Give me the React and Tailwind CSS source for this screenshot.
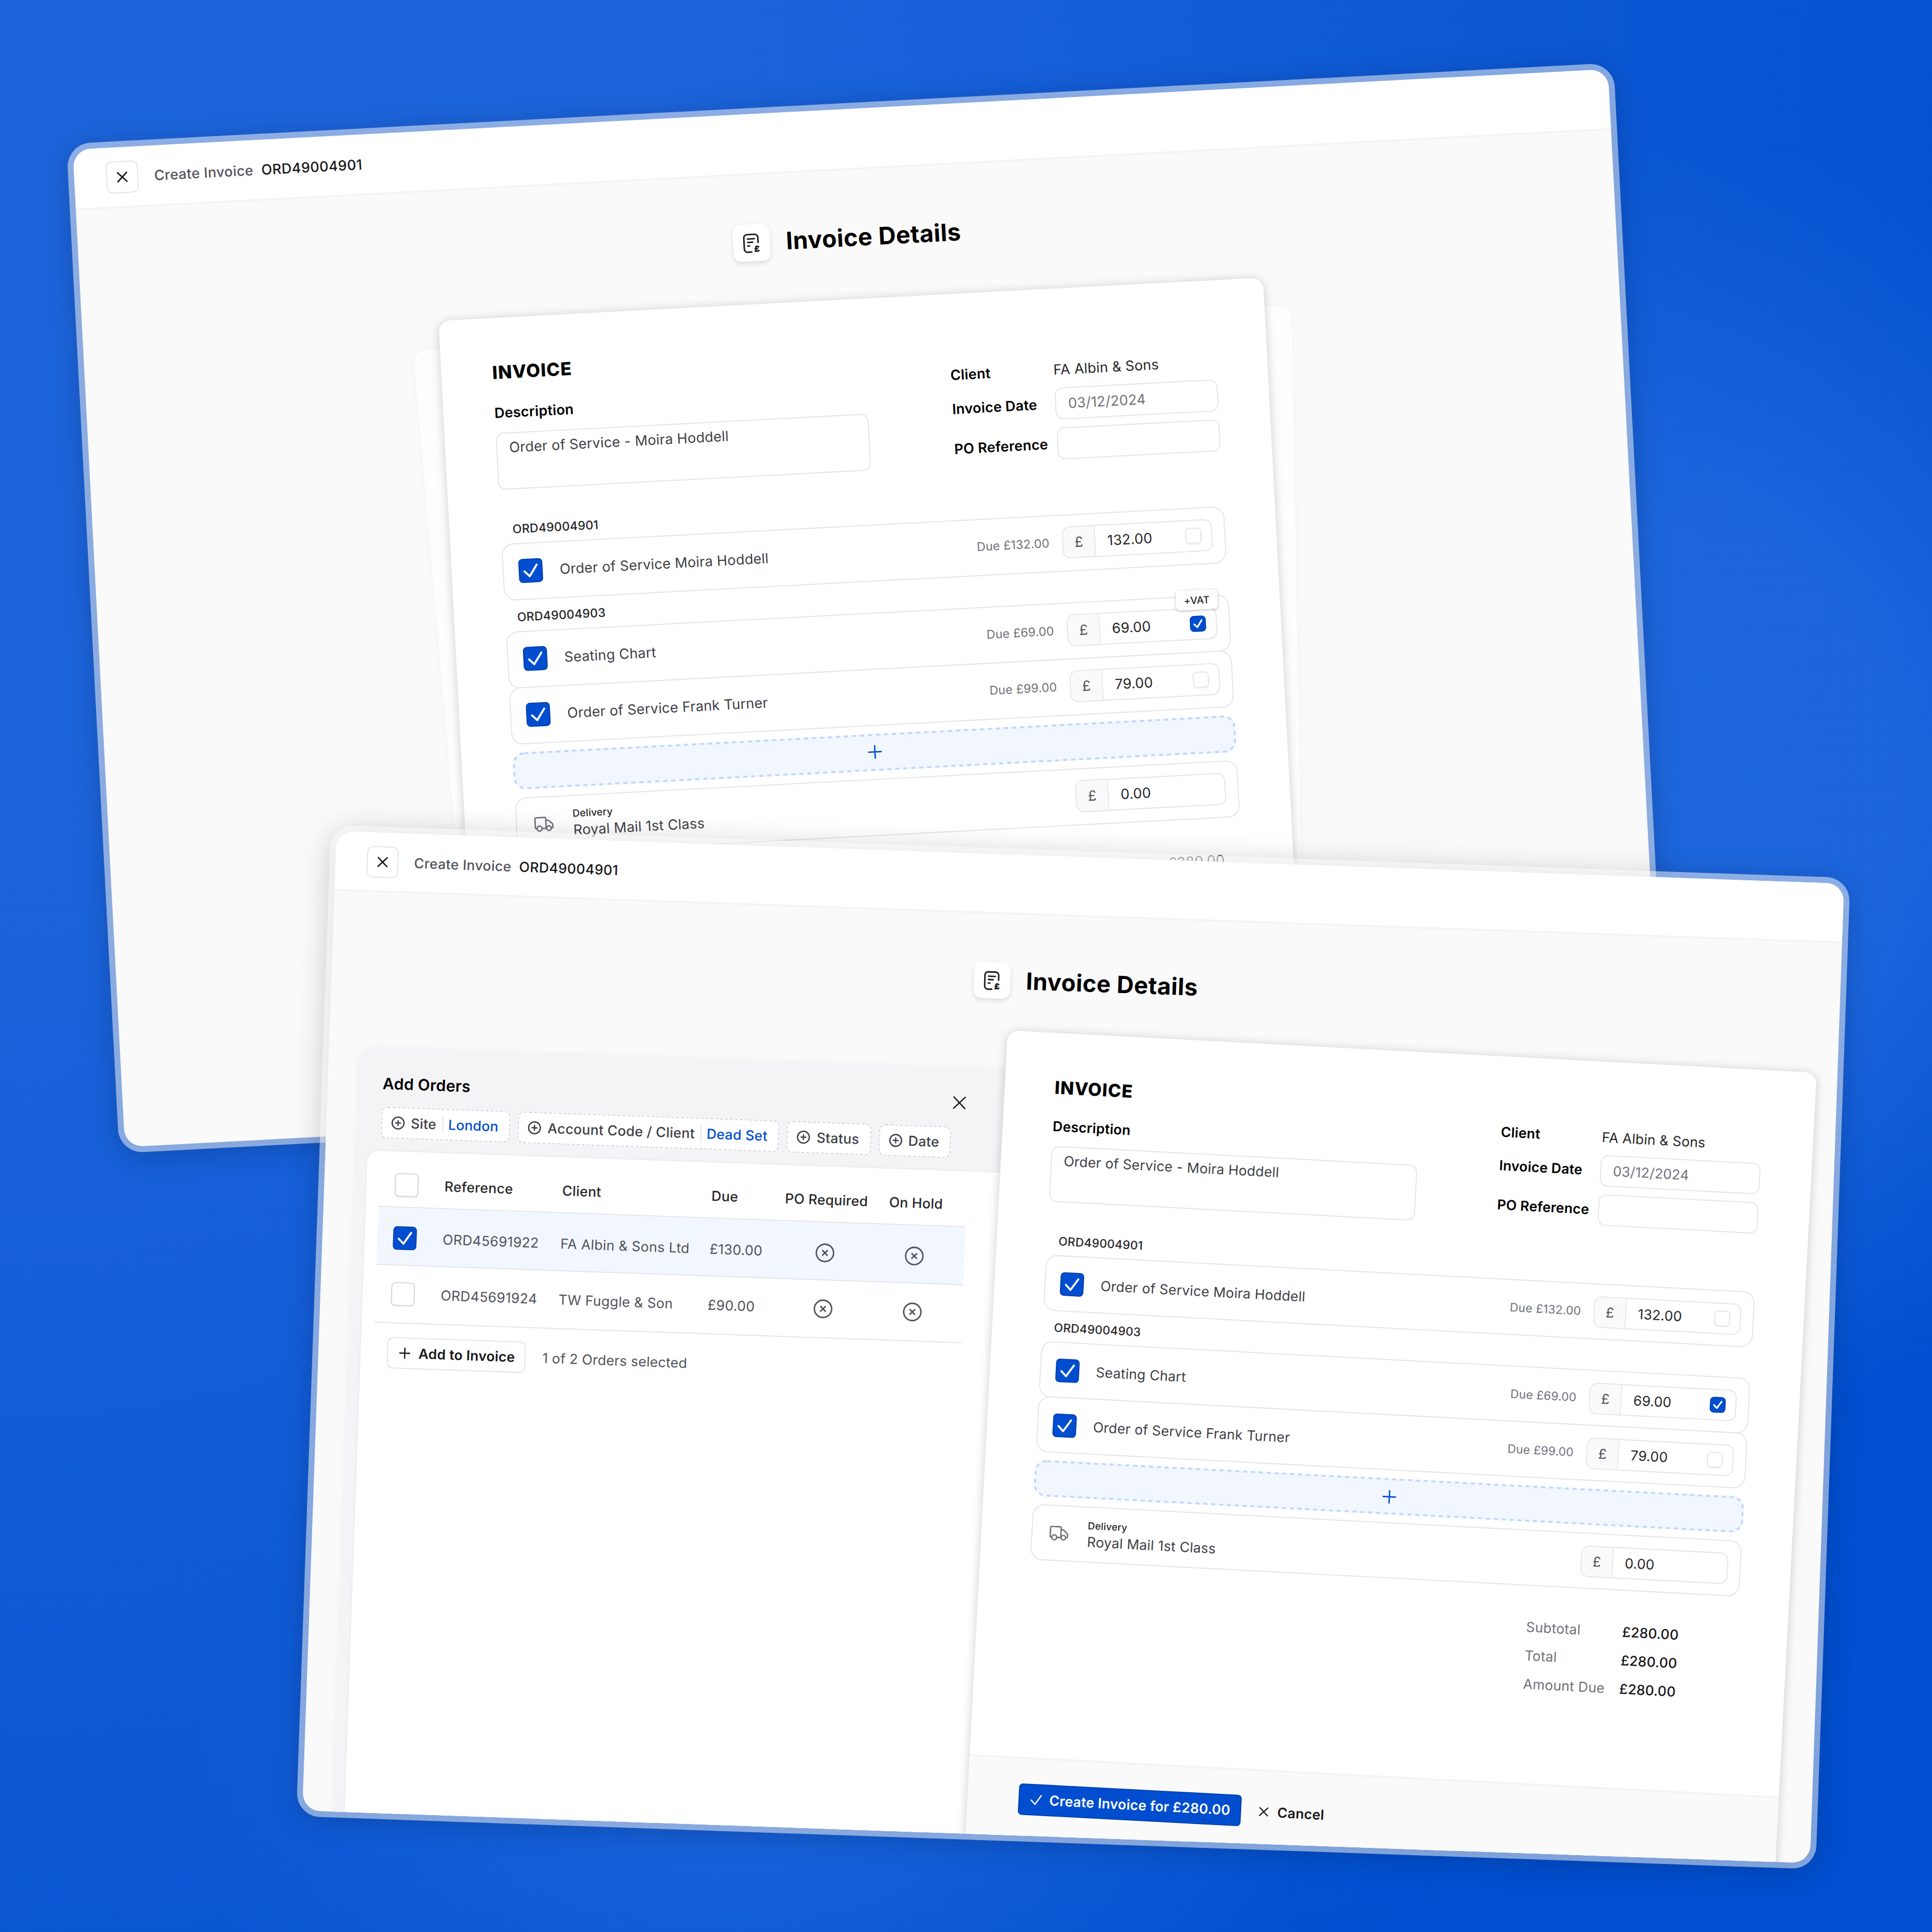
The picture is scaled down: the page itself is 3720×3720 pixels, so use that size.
import React from 'react';

const orders = [
  { ref: 'ORD45691922', client: 'FA Albin & Sons Ltd', due: '£130.00', selected: true },
  { ref: 'ORD45691924', client: 'TW Fuggle & Son', due: '£90.00', selected: false },
];

function Icon({ children, className, strokeWidth = 1.5 }) {
  return (
    <svg
      viewBox="0 0 24 24"
      fill="none"
      stroke="currentColor"
      strokeWidth={strokeWidth}
      strokeLinecap="round"
      strokeLinejoin="round"
      className={`shrink-0 ${className}`}
    >
      {children}
    </svg>
  );
}

function XMark({ className, strokeWidth }) {
  return (
    <Icon className={className} strokeWidth={strokeWidth}>
      <path d="M6 18 18 6M6 6l12 12" />
    </Icon>
  );
}

function Check({ className, strokeWidth }) {
  return (
    <Icon className={className} strokeWidth={strokeWidth}>
      <path d="m4.5 12.75 6 6 9-13.5" />
    </Icon>
  );
}

function Plus({ className, strokeWidth }) {
  return (
    <Icon className={className} strokeWidth={strokeWidth}>
      <path d="M12 4.5v15m7.5-7.5h-15" />
    </Icon>
  );
}

function InvoiceIcon() {
  return (
    <Icon className="size-6 text-zinc-900">
      <path d="M12.3 20.8H8.2A3.2 3.2 0 0 1 5 17.6V6.4a3.2 3.2 0 0 1 3.2-3.2h7.6A3.2 3.2 0 0 1 19 6.4v5.1" />
      <path d="M8.6 7.6h7M8.6 11h5M8.6 14.6h1.8" />
      <text
        x="15"
        y="20.6"
        fontSize="8"
        fontWeight="800"
        fill="currentColor"
        stroke="currentColor"
        strokeWidth="0.4"
        className="font-['Inter',sans-serif]"
      >
        £
      </text>
    </Icon>
  );
}

function TruckIcon() {
  return (
    <Icon className="size-6 text-zinc-500" strokeWidth={1.4}>
      <path d="M4.9 16h-.7a1 1 0 0 1-1-1V6.100a1 1 0 0 1 1-1H13a1 1 0 0 1 1 1V16H9.900" />
      <path d="M14 8h1.800a1.800 1.800 0 0 1 1.200.5l3.200 3c.4.400.6.800.6 1.300v2a1.100 1.100 0 0 1-1.100 1.100M14 16h.3" />
      <circle cx="7.400" cy="16" r="2.500" />
      <circle cx="16.700" cy="16" r="2.300" />
    </Icon>
  );
}

function Checkbox({ checked, small }) {
  if (small) {
    return checked ? (
      <span className="flex size-4 items-center justify-center rounded border border-[#003fae] bg-[#004ecf] text-white">
        <Check className="size-3" strokeWidth={3.4} />
      </span>
    ) : (
      <span className="block size-4 rounded border border-zinc-200 bg-white shadow-xs" />
    );
  }
  return checked ? (
    <span className="flex size-6 shrink-0 items-center justify-center rounded border border-[#003fae] bg-[#004ecf] text-white">
      <Check className="size-5" strokeWidth={2.4} />
    </span>
  ) : (
    <span className="block size-6 shrink-0 rounded border border-zinc-300 bg-white shadow-xs" />
  );
}

function Money({ value, vat, tooltip }) {
  return (
    <div className="relative flex h-8 w-[150px] items-center rounded-lg border border-zinc-200 bg-white">
      <span className="flex h-full w-8 items-center justify-center rounded-l-[7px] border-r border-zinc-200 bg-zinc-50 text-zinc-600">
        £
      </span>
      <span className="flex-1 pl-3 text-zinc-800">{value}</span>
      {vat !== undefined && (
        <span className="pr-2.5">
          <Checkbox small checked={vat} />
        </span>
      )}
      {tooltip && (
        <span className="absolute -top-[19px] -right-[3px] flex h-5 items-center rounded bg-white px-2 text-[10px] font-medium text-zinc-800 shadow-[0_0_1px_rgba(0,0,0,0.2),0_1px_3px_rgba(0,0,0,0.2)]">
          +VAT
        </span>
      )}
    </div>
  );
}

function LineItem({ name, due, value, vat, tooltip, className = '' }) {
  return (
    <div className={`flex h-[57px] items-center rounded-xl border border-zinc-200 bg-white pr-3 pl-[15px] ${className}`}>
      <Checkbox checked />
      <span className="ml-[17px] flex-1 text-zinc-700">{name}</span>
      <span className="mr-[13px] text-xs text-zinc-500">Due {due}</span>
      <Money value={value} vat={vat} tooltip={tooltip} />
    </div>
  );
}

function InvoiceCard({ tooltip, meta, totals, amount }) {
  return (
    <div className="w-[825px] rounded-xl bg-white text-sm tracking-[0.008em] shadow-[0_1px_10px_rgba(0,0,0,0.2)]">
      <div className="h-[738px] px-[51px] pt-[41.5px]">
        <div className="flex items-end justify-between">
          <div className="w-[373px]">
            <h2 className="text-lg leading-7 font-extrabold tracking-[0.035em] text-black">INVOICE</h2>
            <p className="mt-[15.5px] font-semibold text-black">Description</p>
            <div className="mt-2.5 h-[57px] rounded-lg border border-zinc-200 px-3 py-1 text-zinc-700">
              Order of Service - Moira Hoddell
            </div>
          </div>
          <div className={`grid grid-cols-[103px_163px] items-center gap-y-2 ${meta}`}>
            <span className="font-semibold text-black">Client</span>
            <span className="text-zinc-800">FA Albin &amp; Sons</span>
            <span className="font-semibold text-black">Invoice Date</span>
            <span className="flex h-8 items-center rounded-lg border border-zinc-200 px-3 text-zinc-500">03/12/2024</span>
            <span className="font-semibold text-black">PO Reference</span>
            <span className="h-8 rounded-lg border border-zinc-200" />
          </div>
        </div>

        <p className="mt-8 pl-3 text-xs font-medium text-zinc-800">ORD49004901</p>
        <LineItem className="mt-1.5" name="Order of Service Moira Hoddell" due="£132.00" value="132.00" vat={false} />
        <p className="mt-[9px] pl-3 text-xs font-medium text-zinc-800">ORD49004903</p>
        <LineItem className="mt-1.5" name="Seating Chart" due="£69.00" value="69.00" vat tooltip={tooltip} />
        <LineItem className="-mt-px" name="Order of Service Frank Turner" due="£99.00" value="79.00" vat={false} />

        <div className="relative mt-2 flex h-[37px] items-center justify-center rounded-xl bg-[#f2f7ff] text-[#004ecf]">
          <svg viewBox="0 0 723 37" fill="none" className="absolute inset-0 size-full">
            <rect x="1" y="1" width="721" height="35" rx="11" stroke="#bdd7ff" strokeWidth="2" strokeDasharray="4 4" />
          </svg>
          <Plus className="size-5" strokeWidth={1.7} />
        </div>

        <div className="mt-2 flex h-[57px] items-center rounded-xl border border-zinc-200 pr-3 pl-[15px]">
          <TruckIcon />
          <div className="ml-[17px] flex-1">
            <p className="w-fit text-[10px] leading-[14px] font-medium text-zinc-800">Delivery</p>
            <p className="w-fit text-zinc-700">Royal Mail 1st Class</p>
          </div>
          <Money value="0.00" />
        </div>

        <div className={`mt-8 flex justify-end ${totals}`}>
          <div className="grid grid-cols-[98px_58px] gap-y-[9px] text-zinc-500">
            <span>Subtotal</span>
            <span className={amount}>£280.00</span>
            <span>Total</span>
            <span className={amount}>£280.00</span>
            <span>Amount Due</span>
            <span className={amount}>£280.00</span>
          </div>
        </div>
      </div>

      <div className="flex h-28 items-start border-t-2 border-zinc-100 bg-zinc-50 px-[51.5px] pt-[25px] font-semibold">
        <div className="flex h-8 items-center gap-1.5 rounded border border-[#003fae] bg-[#004ecf] pr-2.5 pl-[9px] text-white">
          <Check className="size-4" strokeWidth={2} />
          Create Invoice for £280.00
        </div>
        <div className="ml-[15px] flex h-8 items-center gap-1.5 text-zinc-900">
          <XMark className="size-4" strokeWidth={1.8} />
          Cancel
        </div>
      </div>
    </div>
  );
}

function Window({ className, children }) {
  return (
    <div
      className={`absolute h-[998px] w-[1536px] origin-top-left overflow-hidden rounded-[18px] bg-zinc-50 shadow-[0_0_0_6px_rgba(255,255,255,0.5),0_4px_30px_5px_rgba(0,0,0,0.2)] ${className}`}
    >
      <header className="flex h-[61px] items-center gap-4 border-b-2 border-zinc-100 bg-white px-8 text-sm font-medium">
        <span className="flex size-8 items-center justify-center rounded-md border border-zinc-200 text-zinc-900">
          <XMark className="size-[18px]" strokeWidth={1.9} />
        </span>
        <span className="flex gap-2 tracking-[0.014em]">
          <span className="text-zinc-600">Create Invoice</span>
          <span className="text-zinc-900">ORD49004901</span>
        </span>
      </header>
      <div className="mt-[48.5px] flex h-[38px] items-center justify-center gap-4">
        <span className="flex size-[37px] items-center justify-center rounded-lg bg-white shadow-[0_2px_5px_rgba(0,0,0,0.12)]">
          <InvoiceIcon />
        </span>
        <h1 className="text-2xl font-bold tracking-[0.01em] text-black">Invoice Details</h1>
      </div>
      {children}
    </div>
  );
}

function Chip({ label, value }) {
  return (
    <span className="flex h-8 items-center rounded-md border border-dashed border-zinc-300 bg-white pr-[11px] pl-2 tracking-[0.011em] text-zinc-700">
      <Icon className="mr-[5px] size-4" strokeWidth={2}>
        <circle cx="12" cy="12" r="9" />
        <path d="M12 8.300v7.400M15.700 12H8.300" />
      </Icon>
      {label}
      {value && (
        <>
          <span className="mr-[5px] ml-1.5 h-4 w-px bg-zinc-200" />
          <span className="text-[#004ecf]">{value}</span>
        </>
      )}
    </span>
  );
}

function CircleX() {
  return (
    <Icon className="mx-auto size-6" strokeWidth={1.5}>
      <circle cx="12" cy="12" r="8.800" />
      <path d="m9.600 9.600 4.800 4.800m0-4.800-4.800 4.800" />
    </Icon>
  );
}

function AddOrders() {
  return (
    <aside className="mt-[71.5px] ml-[31px] flex h-[800px] w-[700px] flex-col rounded-tl-2xl bg-[#f4f4f6] pt-[23.5px] text-sm tracking-[0.008em] shadow-[0_0_6px_rgba(0,0,0,0.05)]">
      <div className="ml-[25px] flex w-[599px] items-center justify-between">
        <h2 className="text-base font-semibold text-black">Add Orders</h2>
        <XMark className="size-[23px] text-zinc-900" strokeWidth={1.4} />
      </div>
      <div className="mt-[12.5px] ml-[25px] flex gap-2 font-medium">
        <Chip label="Site" value="London" />
        <Chip label="Account Code / Client" value="Dead Set" />
        <Chip label="Status" />
        <Chip label="Date" />
      </div>
      <div className="mt-[12.5px] ml-3 flex-1 rounded-tl-xl bg-white pt-3 pl-[13px] shadow-[0_0_3px_rgba(0,0,0,0.08)]">
        <div className="w-[598px] tracking-[0.012em]">
          <div className="grid h-[45px] grid-cols-[66.5px_120px_152px_75px_106px_78.5px] items-center border-b border-zinc-200 pt-px font-medium text-zinc-800">
            <span className="flex pl-4">
              <Checkbox />
            </span>
            <span>Reference</span>
            <span>Client</span>
            <span>Due</span>
            <span className="tracking-[0.008em]">PO Required</span>
            <span className="tracking-[0.008em]">On Hold</span>
          </div>
          {orders.map((order) => (
            <div
              key={order.ref}
              className={`grid h-[59px] grid-cols-[66.5px_120px_152px_75px_106px_78.5px] items-center border-b border-zinc-200 text-zinc-600 ${
                order.selected ? 'bg-[#f2f7ff] pt-1' : ''
              }`}
            >
              <span className="flex pl-4">
                <Checkbox checked={order.selected} />
              </span>
              <span>{order.ref}</span>
              <span>{order.client}</span>
              <span>{order.due}</span>
              <span className="w-[85px]">
                <CircleX />
              </span>
              <span className="w-[55px]">
                <CircleX />
              </span>
            </div>
          ))}
        </div>
        <div className="mt-[14.5px] ml-3.5 flex items-center gap-[17px]">
          <span className="flex h-8 items-center gap-1.5 rounded-md border border-zinc-200 pr-2.5 pl-[9px] font-semibold text-zinc-900">
            <Plus className="size-4" strokeWidth={2} />
            Add to Invoice
          </span>
          <span className="text-zinc-600">1 of 2 Orders selected</span>
        </div>
      </div>
    </aside>
  );
}

export default function App() {
  return (
    <div className="relative h-[3720px] w-[3720px] overflow-hidden bg-[#004fd0] bg-[radial-gradient(ellipse_1150px_1250px_at_3200px_1520px,rgba(31,104,222,0.9)_0%,rgba(31,104,222,0.85)_40%,rgba(31,104,222,0)_100%),radial-gradient(ellipse_1100px_650px_at_1450px_3450px,rgba(31,104,222,0.7)_0%,rgba(31,104,222,0)_100%),radial-gradient(ellipse_4200px_5000px_at_0px_0px,#1c64db_0%,#1c64db_30%,rgba(28,100,219,0)_100%)] font-['Inter',sans-serif]">
      <Window className="top-[288px] left-[140px] scale-[1.927] -rotate-3">
        <div className="relative mt-[42px] ml-[356px] w-[825px]">
          {/* loose pages behind the invoice */}
          <div className="absolute top-[29px] left-[-27px] h-[900px] w-[824px] origin-top-left -rotate-2 rounded-xl bg-white/50 shadow-[0_0_6px_rgba(0,0,0,0.04)]" />
          <div className="absolute top-[29px] right-[-27px] h-[900px] w-[824px] origin-top-right rotate-2 rounded-xl bg-white/50 shadow-[0_0_6px_rgba(0,0,0,0.04)]" />
          <div className="relative">
            <InvoiceCard tooltip meta="pb-px" totals="pr-4" amount="text-zinc-600" />
          </div>
        </div>
      </Window>

      <Window className="top-[1600px] left-[648px] scale-[1.891] rotate-2">
        <div className="flex items-start">
          <AddOrders />
          <div className="mt-[31.5px] -ml-[41.5px] origin-top-left rotate-1">
            <InvoiceCard meta="mr-px pb-[5.5px]" totals="pr-[59px]" amount="font-medium text-zinc-900" />
          </div>
        </div>
      </Window>
    </div>
  );
}
